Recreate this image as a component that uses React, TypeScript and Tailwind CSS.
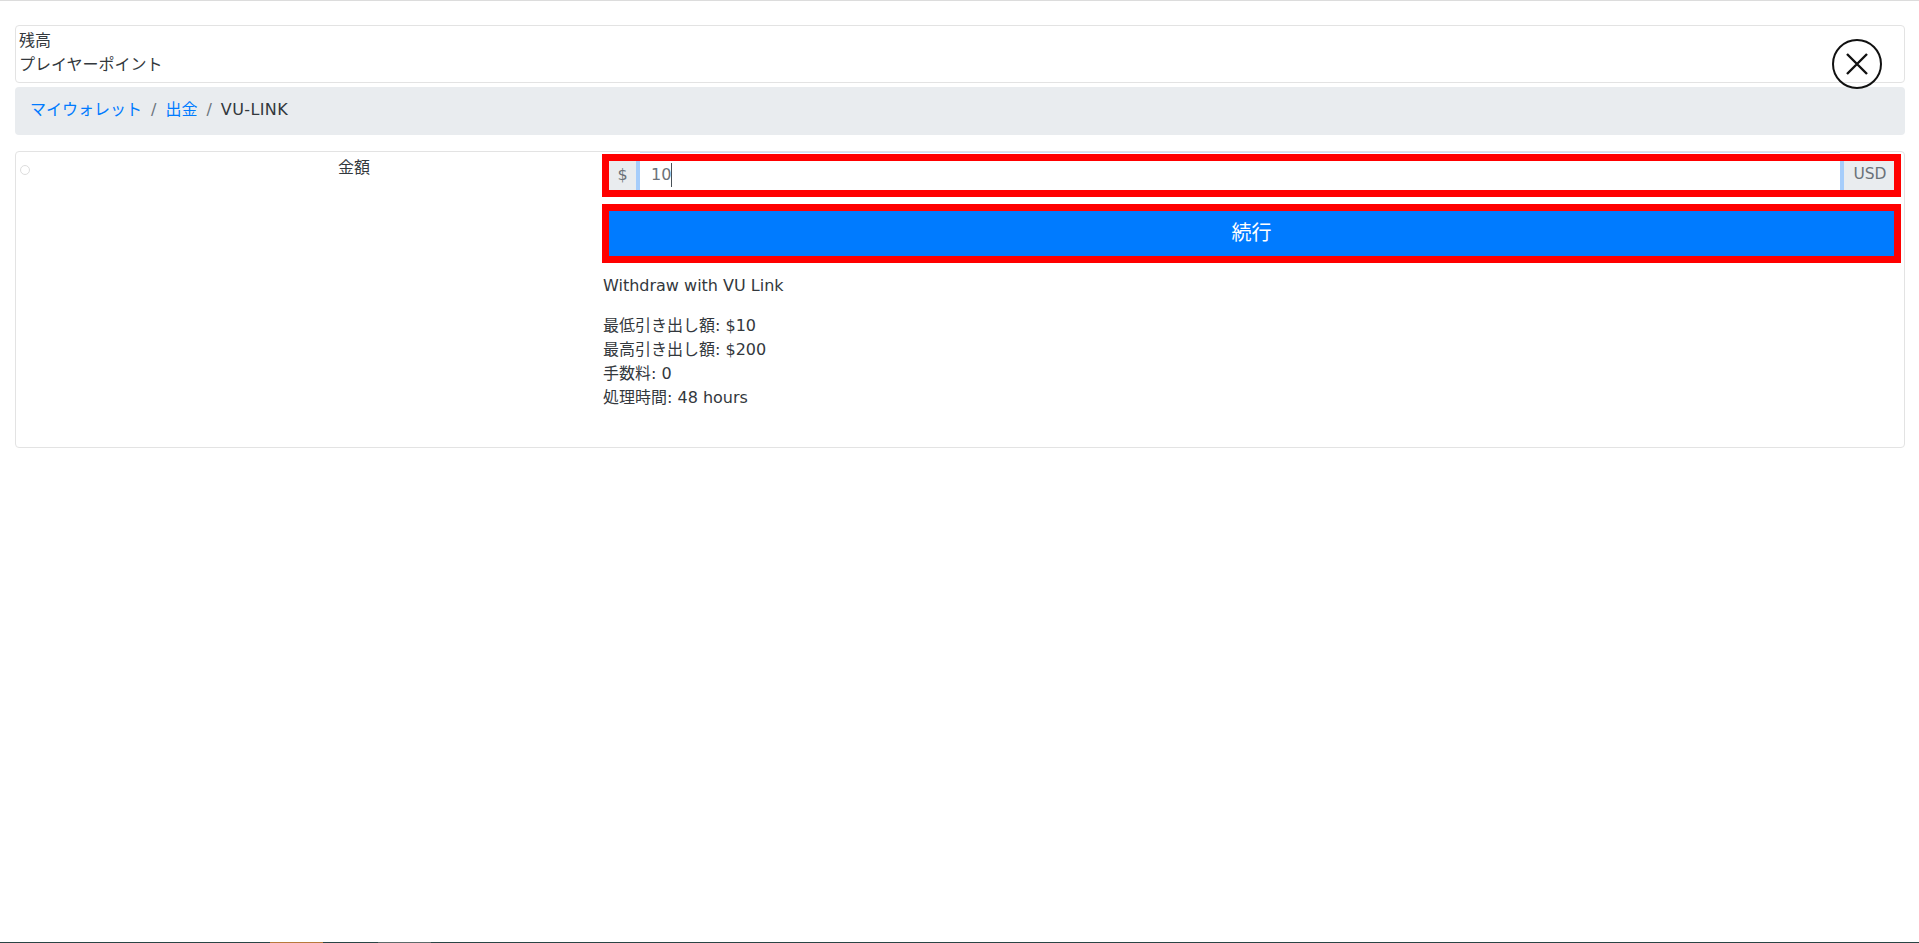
export default function App() {
  return (
    <div className="relative h-[943px] overflow-hidden bg-white text-[#33383d] text-base font-['DejaVu_Sans','Noto_Sans_CJK_JP',sans-serif]">
      <div className="h-px bg-[#dcdcdc]" />

      <div className="pl-[15px] pr-[14px] pt-[24px]">
        {/* Balance */}
        <div className="h-[58px] rounded border border-[#e3e3e3] pl-[3px] pt-[3px] leading-6">
          <div>残高</div>
          <div>プレイヤーポイント</div>
        </div>

        {/* Breadcrumb */}
        <nav className="mt-1 flex h-[48px] items-center rounded bg-[#e9ecef] pb-[2px] pl-[15px] leading-6">
          <a className="text-[#007bff]">マイウォレット</a>
          <span className="px-[9px] text-[#6c757d]">/</span>
          <a className="text-[#007bff]">出金</a>
          <span className="px-[9px] text-[#6c757d]">/</span>
          <span className="tracking-[0.4px]">VU-LINK</span>
        </nav>

        {/* Form */}
        <div className="mt-4 flex h-[297px] rounded border border-[#e3e3e3] pt-[2px]">
          <div className="relative w-[586px] shrink-0 pl-[90px] pt-[2px] text-center leading-6">
            <span className="absolute left-[4px] top-[11px] size-[10px] rounded-full border border-[#dddddd]" />
            <span>金額</span>
          </div>
          <div className="flex-1 pr-[3px]">
            <div className="flex h-[43px] border-[7px] border-[#ff0000] text-[#6b7279]">
              <span className="flex w-[27px] items-center justify-center bg-[#e9ecef] pb-[1px]">$</span>
              <div className="relative flex flex-1 items-center border-x-[4px] border-[#a6cdfb] pb-[1px] pl-[11px]">
                <span className="absolute -top-[9px] left-0 right-0 h-px bg-[#cfe2fb]" />
                <span>10</span>
                <span className="h-[24px] w-px bg-[#495057]" />
              </div>
              <span className="flex w-[50px] items-center justify-center bg-[#e9ecef] pb-[1px] pl-[2px] text-[15.5px]">USD</span>
            </div>
            <button className="mt-[7px] h-[59px] w-full border-[7px] border-[#ff0000] bg-[#007bff] pb-[2px] text-[20px] text-white">
              続行
            </button>
            <p className="mt-[11px] pl-[1px] leading-6">Withdraw with VU Link</p>
            <div className="mt-4 pl-[1px] leading-6">
              <div>最低引き出し額: $10</div>
              <div>最高引き出し額: $200</div>
              <div>手数料: 0</div>
              <div>処理時間: 48 hours</div>
            </div>
          </div>
        </div>
      </div>

      {/* Close */}
      <button className="absolute left-[1832px] top-[39px] size-[50px]">
        <svg viewBox="0 0 50 50" className="size-full" fill="none" stroke="#111111">
          <circle cx="25" cy="25" r="24" strokeWidth="2" />
          <path d="M15 15 L35 35 M35 15 L15 35" strokeWidth="2.4" />
        </svg>
      </button>

      {/* Strip of the window below */}
      <div className="absolute inset-x-0 bottom-0 flex h-px bg-[#2a4444]">
        <div className="ml-[270px] w-[53px] bg-[#b87a3c]" />
        <div className="ml-[55px] w-[53px] bg-[#5e6a6a]" />
      </div>
    </div>
  );
}
